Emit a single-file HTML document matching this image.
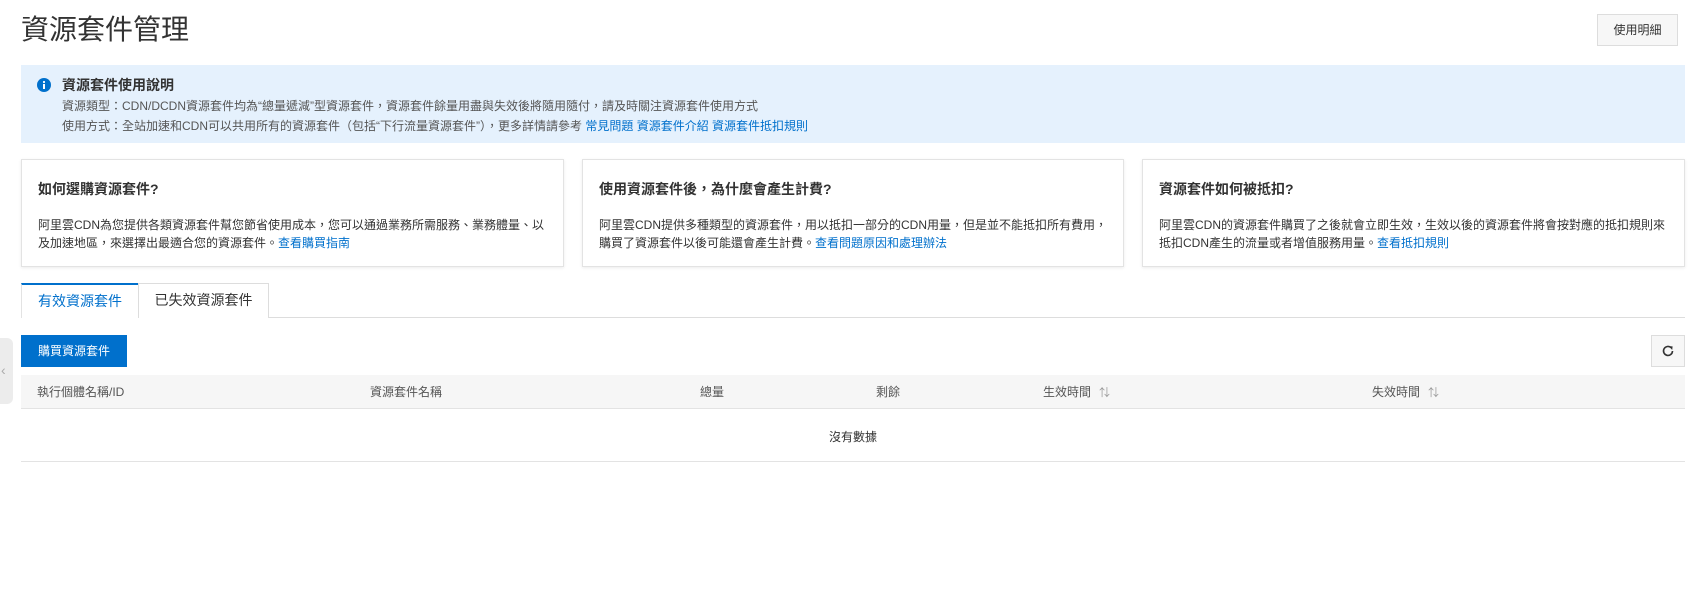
<!DOCTYPE html>
<html><head><meta charset="utf-8"><style>
*{box-sizing:border-box;margin:0;padding:0}
body{width:1700px;height:596px;background:#fff;font-family:"Liberation Sans","Noto Sans CJK TC",sans-serif;color:#333;position:relative;overflow:hidden;font-size:12px}
.a{position:absolute}
a{color:#0070cc;text-decoration:none}
.card{position:absolute;top:159px;height:108px;border:1px solid #e3e3e3;box-shadow:0 1px 3px rgba(0,0,0,.08);background:#fff;padding:0 16px}
.card h3{position:absolute;top:19px;left:16px;font-size:14px;font-weight:bold;color:#333;line-height:20px}
.card p{position:absolute;top:56px;left:16px;right:14px;font-size:12px;line-height:18px;color:#333}
.th{position:absolute;top:384px;font-size:12px;color:#555;line-height:16px}
.sort{display:inline-block;margin-left:8px;color:#999;font-size:11px}
</style></head><body>
<div class="a" style="left:21px;top:12px;font-size:28px;line-height:36px;color:#333">資源套件管理</div>
<div class="a" style="left:1597px;top:14px;width:81px;height:32px;border:1px solid #ddd;background:#f7f7f7;font-size:12px;text-align:center;line-height:30px;color:#333">使用明細</div>

<div class="a" style="left:21px;top:65px;width:1664px;height:78px;background:#e5f1fd"></div>
<svg class="a" style="left:37px;top:78px" width="14" height="14" viewBox="0 0 14 14"><circle cx="7" cy="7" r="7" fill="#0070cc"/><rect x="6" y="6" width="2" height="5" fill="#fff"/><circle cx="7" cy="4" r="1.1" fill="#fff"/></svg>
<div class="a" style="left:62px;top:75px;font-size:14px;font-weight:bold;line-height:20px;color:#333">資源套件使用說明</div>
<div class="a" style="left:62px;top:98px;font-size:12px;line-height:16px;color:#555">資源類型：CDN/DCDN資源套件均為“總量遞減”型資源套件，資源套件餘量用盡與失效後將隨用隨付，請及時關注資源套件使用方式</div>
<div class="a" style="left:62px;top:118px;font-size:12px;line-height:16px;color:#555">使用方式：全站加速和CDN可以共用所有的資源套件（包括“下行流量資源套件”），更多詳情請參考 <a>常見問題</a> <a>資源套件介紹</a> <a>資源套件抵扣規則</a></div>

<div class="card" style="left:21px;width:543px"><h3>如何選購資源套件?</h3><p>阿里雲CDN為您提供各類資源套件幫您節省使用成本，您可以通過業務所需服務、業務體量、以及加速地區，來選擇出最適合您的資源套件。<a>查看購買指南</a></p></div>
<div class="card" style="left:582px;width:542px"><h3>使用資源套件後，為什麼會產生計費?</h3><p>阿里雲CDN提供多種類型的資源套件，用以抵扣一部分的CDN用量，但是並不能抵扣所有費用，購買了資源套件以後可能還會產生計費。<a>查看問題原因和處理辦法</a></p></div>
<div class="card" style="left:1142px;width:543px"><h3>資源套件如何被抵扣?</h3><p>阿里雲CDN的資源套件購買了之後就會立即生效，生效以後的資源套件將會按對應的抵扣規則來抵扣CDN產生的流量或者增值服務用量。<a>查看抵扣規則</a></p></div>

<div class="a" style="left:21px;top:317px;width:1664px;height:1px;background:#ddd"></div>
<div class="a" style="left:21px;top:283px;width:117px;height:35px;border-top:2px solid #0070cc;border-left:1px solid #e3e3e3;background:#fff;text-align:center;line-height:32px;font-size:14px;color:#0070cc">有效資源套件</div>
<div class="a" style="left:138px;top:283px;width:131px;height:35px;border:1px solid #ddd;border-bottom:none;background:#fff;text-align:center;line-height:33px;font-size:14px;color:#333">已失效資源套件</div>

<div class="a" style="left:0;top:338px;width:13px;height:66px;background:#ececec;border-radius:0 6px 6px 0"></div>
<div class="a" style="left:1px;top:362px;font-size:14px;color:#aaa;line-height:16px">‹</div>

<div class="a" style="left:21px;top:335px;width:106px;height:32px;background:#0070cc;color:#fff;font-size:12px;text-align:center;line-height:32px">購買資源套件</div>
<div class="a" style="left:1651px;top:335px;width:34px;height:32px;border:1px solid #ddd;background:#f7f7f7"></div>
<svg class="a" style="left:1661px;top:344px" width="14" height="14" viewBox="0 0 14 14"><path d="M11.5 7a4.5 4.5 0 1 1-1.4-3.3" fill="none" stroke="#333" stroke-width="1.6"/><path d="M8 2.2l3.6 0.2-0.4 3.6z" fill="#333"/></svg>

<div class="a" style="left:21px;top:375px;width:1664px;height:34px;background:#f6f6f6;border-bottom:1px solid #e3e3e3"></div>
<div class="th" style="left:37px">執行個體名稱/ID</div>
<div class="th" style="left:370px">資源套件名稱</div>
<div class="th" style="left:700px">總量</div>
<div class="th" style="left:876px">剩餘</div>
<div class="th" style="left:1043px">生效時間<span class="sort">⇅</span></div>
<div class="th" style="left:1372px">失效時間<span class="sort">⇅</span></div>
<div class="a" style="left:21px;top:429px;width:1664px;text-align:center;font-size:12px;line-height:16px;color:#333">沒有數據</div>
<div class="a" style="left:21px;top:461px;width:1664px;height:1px;background:#e3e3e3"></div>
</body></html>
